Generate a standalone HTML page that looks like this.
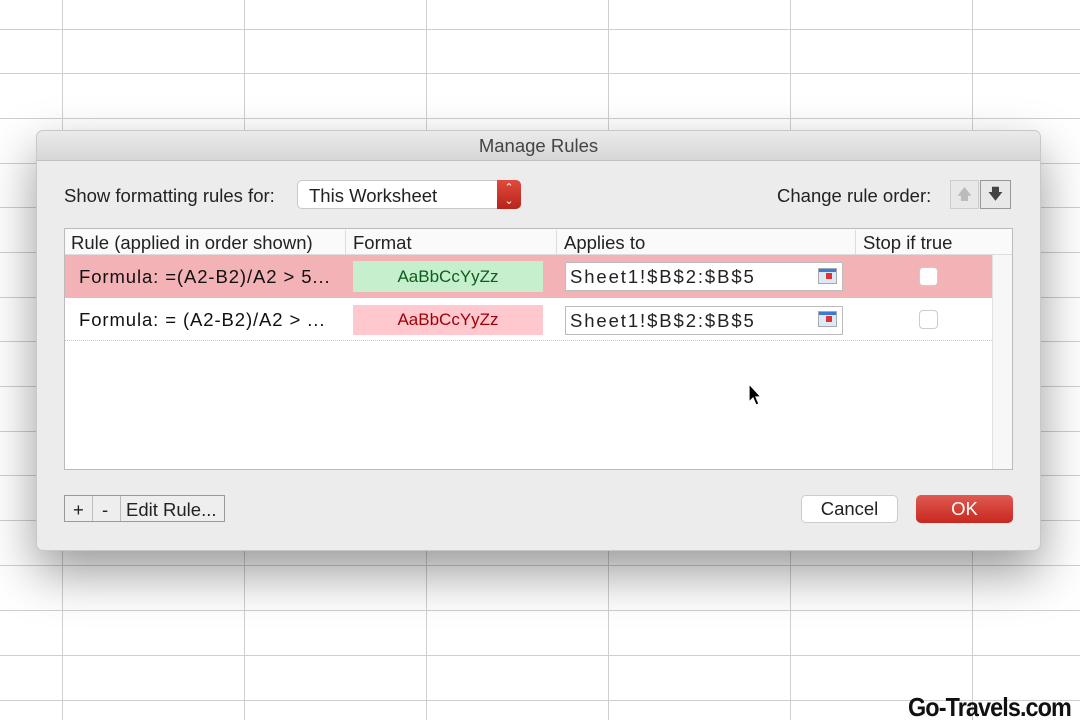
<!DOCTYPE html>
<html><head><style>
*{margin:0;padding:0;box-sizing:border-box}
body{width:1080px;height:720px;position:relative;overflow:hidden;background:#fff;font-family:"Liberation Sans",sans-serif;color:#222}
.v{position:absolute;top:0;width:1px;height:720px;background:#cfcfcf}
.h{position:absolute;left:0;width:1080px;height:1px;background:#cfcfcf}
.dlg{position:absolute;left:36px;top:130px;width:1005px;height:421px;background:#ececec;border-radius:7px;box-shadow:0 22px 50px rgba(0,0,0,.4);border:1px solid #c8c8c8;overflow:hidden}
.title{height:30px;background:linear-gradient(#ebebeb,#d6d6d6);border-bottom:1px solid #c0c0c0;text-align:center;font-size:18.5px;line-height:30px;color:#444}
.a{position:absolute;white-space:nowrap}
.t{font-size:18.5px}
.f{letter-spacing:.9px}
.s{letter-spacing:1.9px}
</style></head><body>
<div class="v" style="left:62px"></div><div class="v" style="left:244px"></div><div class="v" style="left:426px"></div><div class="v" style="left:608px"></div><div class="v" style="left:790px"></div><div class="v" style="left:972px"></div>
<div class="h" style="top:29px"></div><div class="h" style="top:73px"></div><div class="h" style="top:118px"></div><div class="h" style="top:163px"></div><div class="h" style="top:207px"></div><div class="h" style="top:252px"></div><div class="h" style="top:297px"></div><div class="h" style="top:341px"></div><div class="h" style="top:386px"></div><div class="h" style="top:431px"></div><div class="h" style="top:475px"></div><div class="h" style="top:520px"></div><div class="h" style="top:565px"></div><div class="h" style="top:610px"></div><div class="h" style="top:655px"></div><div class="h" style="top:700px"></div>

<div class="dlg">
<div class="title">Manage Rules</div>
<div class="a t" style="left:27px;top:54px">Show formatting rules for:</div>
<div class="a" style="left:260px;top:49px;width:224px;height:29px;background:#fff;border:1px solid #c8c8c8;border-radius:5px"></div>
<div class="a t" style="left:272px;top:54px">This Worksheet</div>
<div class="a" style="left:460px;top:49px;width:24px;height:29px;background:linear-gradient(#e04a3e,#b8231a);border-radius:0 5px 5px 0;color:#fff;text-align:center;font-size:11px;line-height:13px;padding-top:2px">⌃<br>⌄</div>
<div class="a t" style="left:740px;top:54px">Change rule order:</div>
<div class="a" style="left:913px;top:49px;width:29px;height:29px;border:1px solid #ccc;background:#e8e8e8;color:#bbb;text-align:center;line-height:27px;font-size:15px">🡅</div>
<div class="a" style="left:943px;top:49px;width:31px;height:29px;border:1px solid #999;background:#e8e8e8;color:#444;text-align:center;line-height:27px;font-size:15px">🡇</div>

<div class="a" style="left:27px;top:97px;width:949px;height:242px;background:#fff;border:1px solid #bbb"></div>
<div class="a" style="left:955px;top:124px;width:20px;height:214px;background:#f7f7f7;border-left:1px solid #e2e2e2"></div>
<div class="a" style="left:28px;top:98px;width:947px;height:26px;background:#fafafa;border-bottom:1px solid #ddd"></div>
<div class="a" style="left:308px;top:99px;width:1px;height:24px;background:#ddd"></div>
<div class="a" style="left:519px;top:99px;width:1px;height:24px;background:#ddd"></div>
<div class="a" style="left:818px;top:99px;width:1px;height:24px;background:#ddd"></div>
<div class="a t" style="left:34px;top:101px">Rule (applied in order shown)</div>
<div class="a t" style="left:316px;top:101px">Format</div>
<div class="a t" style="left:527px;top:101px">Applies to</div>
<div class="a t" style="left:826px;top:101px">Stop if true</div>

<div class="a" style="left:28px;top:124px;width:927px;height:43px;background:#f2b2b6;border-bottom:1px dotted #ccc"></div>
<div class="a" style="left:28px;top:167px;width:927px;height:43px;background:#fff;border-bottom:1px dotted #ccc"></div>
<div class="a t f" style="left:42px;top:135px;color:#111">Formula: =(A2-B2)/A2 &gt; 5...</div>
<div class="a t f" style="left:42px;top:178px;color:#111">Formula: = (A2-B2)/A2 &gt; ...</div>
<div class="a" style="left:316px;top:130px;width:190px;height:31px;background:#c6efce;color:#0d5e1c;text-align:center;line-height:31px;font-size:17px">AaBbCcYyZz</div>
<div class="a" style="left:316px;top:174px;width:190px;height:30px;background:#ffc7ce;color:#9c0006;text-align:center;line-height:30px;font-size:17px">AaBbCcYyZz</div>
<div class="a" style="left:528px;top:131px;width:278px;height:29px;background:#fff;border:1px solid #bbb"></div>
<div class="a" style="left:528px;top:175px;width:278px;height:29px;background:#fff;border:1px solid #bbb"></div>
<div class="a t s" style="left:533px;top:135px">Sheet1!$B$2:$B$5</div>
<div class="a t s" style="left:533px;top:179px">Sheet1!$B$2:$B$5</div>
<div class="a" style="left:781px;top:137px;width:19px;height:16px;background:linear-gradient(#3a7bd5 0 3px,#dde9f7 3px);border:1px solid #aaa"><div style="margin:4px 0 0 7px;width:6px;height:6px;background:#d33"></div></div>
<div class="a" style="left:781px;top:180px;width:19px;height:16px;background:linear-gradient(#3a7bd5 0 3px,#dde9f7 3px);border:1px solid #aaa"><div style="margin:4px 0 0 7px;width:6px;height:6px;background:#d33"></div></div>
<div class="a" style="left:882px;top:136px;width:19px;height:19px;background:#fff;border:1px solid #ccc;border-radius:4px"></div>
<div class="a" style="left:882px;top:179px;width:19px;height:19px;background:#fff;border:1px solid #ccc;border-radius:4px"></div>

<div class="a" style="left:27px;top:364px;width:161px;height:27px;border:1px solid #999;background:#eee"></div>
<div class="a" style="left:55px;top:365px;width:1px;height:25px;background:#bbb"></div>
<div class="a" style="left:83px;top:365px;width:1px;height:25px;background:#bbb"></div>
<div class="a t" style="left:36px;top:368px">+</div>
<div class="a t" style="left:65px;top:368px">-</div>
<div class="a t" style="left:89px;top:368px">Edit Rule...</div>
<div class="a t" style="left:764px;top:364px;width:97px;height:28px;background:#fff;border:1px solid #ccc;border-radius:5px;text-align:center;line-height:26px">Cancel</div>
<div class="a t" style="left:879px;top:364px;width:97px;height:28px;background:linear-gradient(#e05a52,#c8281f);border-radius:5px;text-align:center;line-height:28px;color:#fff">OK</div>
</div>
<svg class="a" style="left:747px;top:382px" width="16" height="26" viewBox="0 0 16 26"><path d="M2 2 L2 20 L6 16 L9 23 L12 22 L9 15 L14 15 Z" fill="#000" stroke="#fff" stroke-width="1.2"/></svg>
<div class="a" style="left:908px;top:692px;font-size:26px;font-weight:bold;letter-spacing:-1px;color:#111;transform:scaleX(.9);transform-origin:left">Go-Travels.com</div>
</body></html>
